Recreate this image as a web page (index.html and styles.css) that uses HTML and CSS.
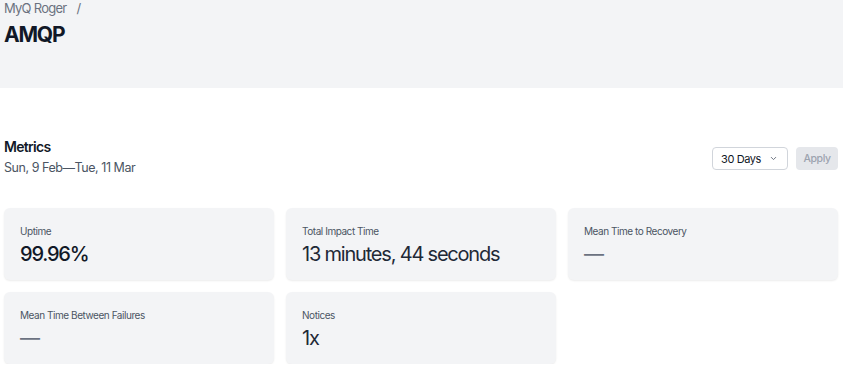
FILE: index.html
```html
<!DOCTYPE html>
<html lang="en">
<head>
    <meta charset="UTF-8">
    <title>AMQP - Status</title>
    <link rel="stylesheet" href="styles.css">
</head>
<body>
    <header class="page-header">
        <div class="breadcrumb">
            <span>MyQ Roger</span>
            <span class="sep">/</span>
        </div>
        <h1>AMQP</h1>
    </header>

    <main class="content">
        <div class="metrics-head">
            <div>
                <h2>Metrics</h2>
                <div class="range">Sun, 9 Feb&mdash;Tue, 11 Mar</div>
            </div>
            <div class="controls">
                <div class="select">
                    <span>30 Days</span>
                    <svg width="11" height="11" viewBox="0 0 20 20" fill="none" stroke="#6b7280" stroke-width="1.8" stroke-linecap="round" stroke-linejoin="round"><path d="M6 8l4 4 4-4"/></svg>
                </div>
                <button class="apply" disabled>Apply</button>
            </div>
        </div>

        <div class="cards">
            <div class="card">
                <div class="label">Uptime</div>
                <div class="value strong">99.96%</div>
            </div>
            <div class="card">
                <div class="label">Total Impact Time</div>
                <div class="value">13 minutes, 44 seconds</div>
            </div>
            <div class="card">
                <div class="label">Mean Time to Recovery</div>
                <div class="value muted">&mdash;</div>
            </div>
            <div class="card">
                <div class="label">Mean Time Between Failures</div>
                <div class="value muted">&mdash;</div>
            </div>
            <div class="card">
                <div class="label">Notices</div>
                <div class="value">1x</div>
            </div>
        </div>
    </main>
</body>
</html>
```

FILE: styles.css
```css
body {
    font-family: Inter, "Noto Sans", sans-serif;
    margin: 0;
    background: #fff;
    color: #111827;
}
.page-header {
    background: #f3f4f6;
    height: 88px;
    padding: 0 4px;
    box-sizing: border-box;
}
.breadcrumb {
    font-size: 13px;
    letter-spacing: -0.75px;
    color: #6b7280;
    line-height: 17px;
    display: flex;
    gap: 10px;
}
.page-header h1 {
    margin: 5px 0 0;
    font-size: 21px;
    letter-spacing: -1.2px;
    font-weight: 700;
    line-height: 26px;
    color: #111827;
}
.content {
    padding: 50px 5px 0 4px;
}
.metrics-head {
    display: flex;
    justify-content: space-between;
    align-items: center;
}
.metrics-head h2 {
    margin: 0;
    font-size: 14px;
    letter-spacing: -0.7px;
    font-weight: 600;
    line-height: 18px;
}
.range {
    margin-top: 4px;
    font-size: 12.5px;
    letter-spacing: -0.45px;
    color: #4b5563;
    line-height: 16px;
}
.controls {
    display: flex;
    gap: 8px;
    margin-top: 3px;
}
.select {
    width: 76px;
    height: 23px;
    box-sizing: border-box;
    border: 1px solid #d1d5db;
    border-radius: 4px;
    padding: 0 8px;
    display: flex;
    align-items: center;
    justify-content: space-between;
    font-size: 11px;
    letter-spacing: -0.4px;
    color: #111827;
}
.apply {
    width: 42px;
    height: 23px;
    border: none;
    border-radius: 4px;
    background: #e5e7eb;
    color: #9ca3af;
    font-family: inherit;
    font-size: 10.5px;
    letter-spacing: -0.4px;
    font-weight: 500;
    padding: 0;
}
.cards {
    margin-top: 32px;
    display: grid;
    grid-template-columns: repeat(3, 1fr);
    gap: 12px;
}
.card {
    background: #f3f4f6;
    border-radius: 6px;
    box-shadow: 0 1px 2px rgba(0,0,0,0.08);
    height: 72px;
    box-sizing: border-box;
    padding: 17px 16px 0;
}
.label {
    font-size: 10px;
    letter-spacing: -0.45px;
    color: #4b5563;
    line-height: 13px;
}
.value {
    margin-top: 3px;
    font-size: 20px;
    letter-spacing: -1.2px;
    line-height: 26px;
    color: #1f2937;
}
.value.strong {
    font-weight: 500;
    color: #111827;
}
.value.muted {
    color: #6b7280;
    letter-spacing: 0;
}
```
